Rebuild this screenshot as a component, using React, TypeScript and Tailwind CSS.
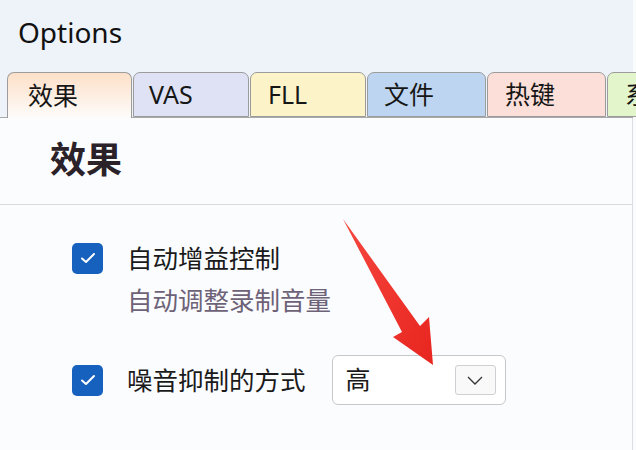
import React from "react";

const tabs = [
  { label: "效果", w: "w-[125px]", cls: "bg-gradient-to-b from-[#fde0c8] to-[#fdfcfb] pl-[20px] border-b-0 h-[46px] -mb-px z-10" },
  { label: "VAS", w: "w-[116px]", cls: "bg-[#dfe2f4] pl-[15px]" },
  { label: "FLL", w: "w-[116px]", cls: "bg-[#fdf3c8] pl-[17px]" },
  { label: "文件", w: "w-[119px]", cls: "bg-[#bdd5f0] pl-[16px]" },
  { label: "热键", w: "w-[119px]", cls: "bg-[#fbdfd8] pl-[17px]" },
  { label: "系统", w: "w-[90px]", cls: "bg-[#e3f6cb] pl-[17px]" },
];

const Check: React.FC = () => (
  <div className="w-[31px] h-[31px] rounded-[5px] bg-[#1761be] flex items-center justify-center shrink-0">
    <svg width="16" height="12" viewBox="0 0 16 12" fill="none">
      <path d="M2 6.5 L6 10 L14 2" stroke="white" strokeWidth="2" strokeLinecap="round" strokeLinejoin="round" />
    </svg>
  </div>
);

export default function App() {
  return (
    <div
      className="relative w-[636px] h-[450px] overflow-hidden bg-[#fbfcfe] text-[#1a1a1a]"
      style={{ fontFamily: '"Noto Sans", "Noto Sans CJK SC", sans-serif' }}
    >
      <div className="bg-[#eef2f9] w-[633px]">
        <div className="h-[73px] pl-[18px] pt-[12px] text-[28px] leading-[40px] text-[#111]">Options</div>
        <div className="flex items-end h-[45px] border-b border-[#a9a9a9] pl-[7px] gap-px">
          {tabs.map((t) => (
            <div
              key={t.label}
              className={`relative ${t.w} h-[45px] shrink-0 border border-[#9c9c9c] rounded-t-[7px] flex items-center text-[25px] leading-none text-[#161616] ${t.cls}`}
            >
              {t.label}
            </div>
          ))}
        </div>
      </div>

      <div className="w-[633px] border-r border-[#dadde2] h-[332px]">
        <div className="h-[87px] border-b border-[#d9dadd] flex items-center pl-[50px] pb-[2px]">
          <span className="text-[36px] font-semibold text-[#2a2228]">效果</span>
        </div>
        <div className="pl-[72px] pt-[37px]">
          <div className="flex items-center gap-[24px] h-[32px]">
            <Check />
            <span className="text-[25.5px]">自动增益控制</span>
          </div>
          <div className="pl-[55px] mt-[10px] text-[25.5px] leading-[32px] text-[#6d6277]">自动调整录制音量</div>
          <div className="flex items-center mt-[39px] h-[50px]">
            <Check />
            <span className="ml-[24px] text-[25.5px]">噪音抑制的方式</span>
            <div className="ml-[26px] w-[174px] h-[50px] rounded-[6px] border border-[#c6c7ca] bg-white flex items-center justify-between pl-[13px] pr-[9px]">
              <span className="text-[25px]">高</span>
              <div className="w-[41px] h-[30px] rounded-[3px] border border-[#cfd0d3] bg-[#f9f9fa] flex items-center justify-center">
                <svg width="16" height="9" viewBox="0 0 16 9" fill="none">
                  <path d="M1 1 L8 8 L15 1" stroke="#333" strokeWidth="1.3" />
                </svg>
              </div>
            </div>
          </div>
        </div>
      </div>

      <svg className="absolute left-0 top-0 pointer-events-none" width="636" height="450" viewBox="0 0 636 450">
        <defs>
          <linearGradient id="ar" x1="0" y1="0" x2="1" y2="1">
            <stop offset="0" stopColor="#f5473f" />
            <stop offset="1" stopColor="#e8251f" />
          </linearGradient>
        </defs>
        <polygon
          points="343,219 420,326 429,317 433,365 393,337 402,332"
          fill="url(#ar)"
        />
      </svg>
    </div>
  );
}
